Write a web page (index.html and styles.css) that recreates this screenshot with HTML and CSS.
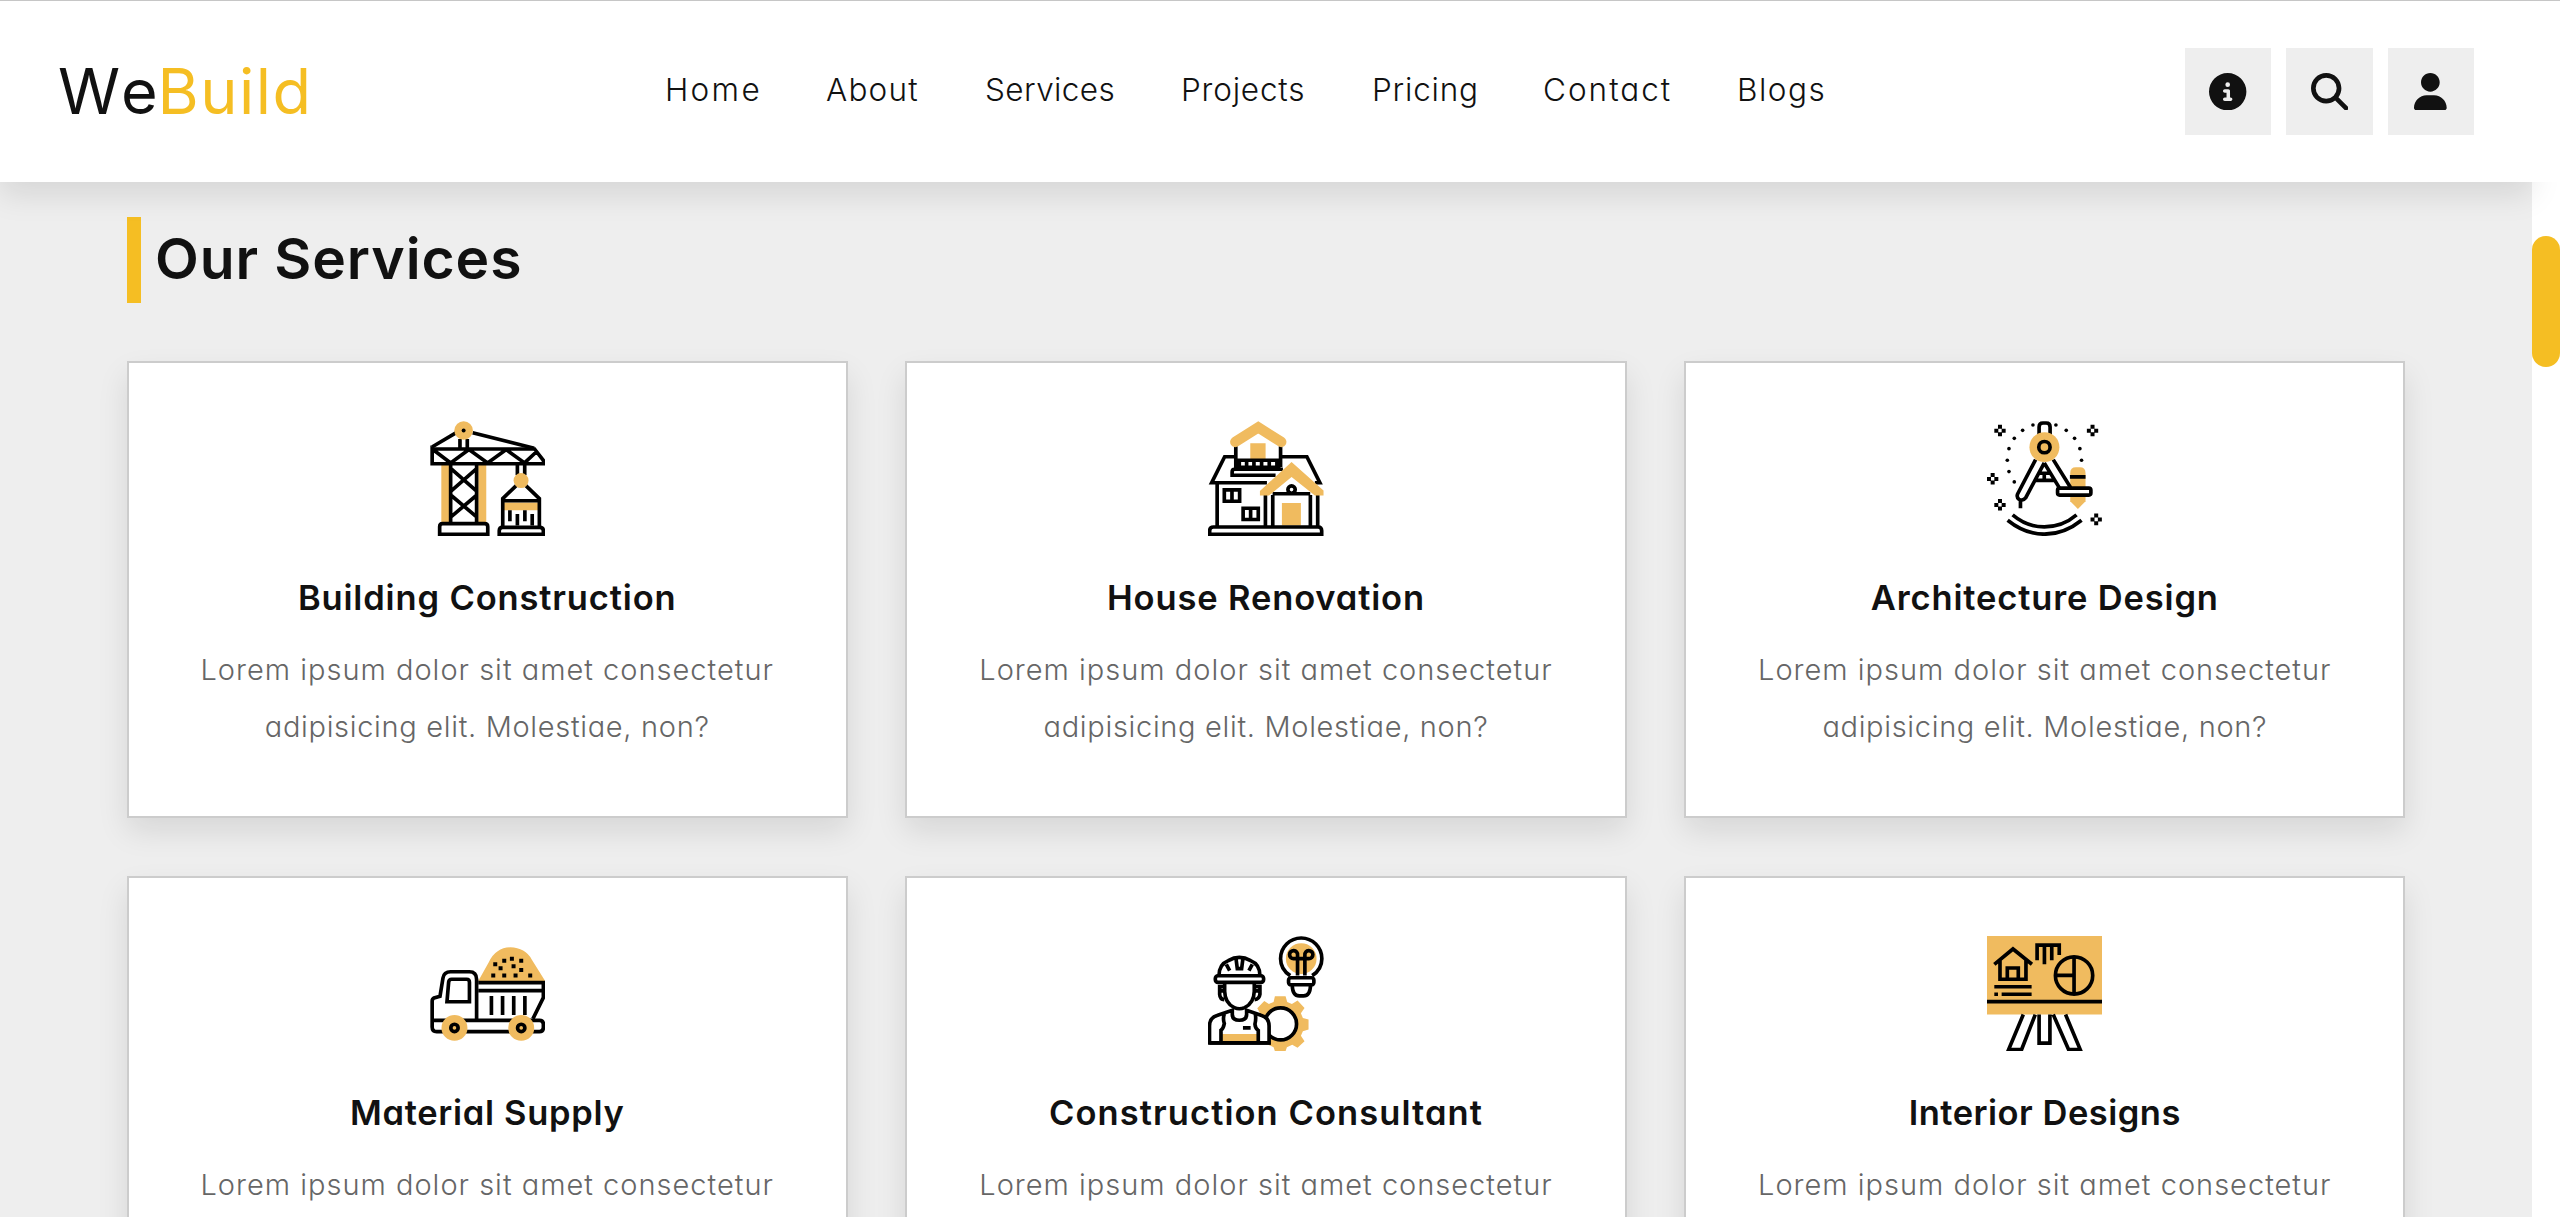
FILE: index.html
```html
<!DOCTYPE html>
<html lang="en">
<head>
<meta charset="utf-8">
<title>WeBuild</title>
<link rel="stylesheet" href="styles.css">
</head>
<body>
<header class="header">
  <a class="logo"><span class="logo-we">We</span><span class="logo-build">Build</span></a>
  <nav class="navbar">
    <a>Home</a><a>About</a><a>Services</a><a>Projects</a><a>Pricing</a><a>Contact</a><a>Blogs</a>
  </nav>
  <div class="icons">
    <button class="icon-btn" aria-label="Info"><svg viewBox="0 0 512 512"><path d="M256 512A256 256 0 1 0 256 0a256 256 0 1 0 0 512zM216 336h24V272H216c-13.3 0-24-10.7-24-24s10.7-24 24-24h48c13.3 0 24 10.7 24 24v88h8c13.3 0 24 10.7 24 24s-10.7 24-24 24H216c-13.3 0-24-10.7-24-24s10.7-24 24-24zm40-208a32 32 0 1 1 0 64 32 32 0 1 1 0-64z"/></svg></button>
    <button class="icon-btn" aria-label="Search"><svg viewBox="0 0 512 512"><path d="M416 208c0 45.9-14.9 88.3-40 122.7L502.6 457.4c12.5 12.5 12.5 32.8 0 45.3s-32.8 12.5-45.3 0L330.7 376c-34.4 25.2-76.8 40-122.7 40C93.1 416 0 322.9 0 208S93.1 0 208 0S416 93.1 416 208zM208 352a144 144 0 1 0 0-288 144 144 0 1 0 0 288z"/></svg></button>
    <button class="icon-btn" aria-label="Account"><svg viewBox="0 0 448 512"><path d="M224 256c70.7 0 128-57.31 128-128s-57.3-128-128-128C153.3 0 96 57.31 96 128S153.3 256 224 256zM274.7 304H173.3C77.61 304 0 381.6 0 477.3c0 19.14 15.52 34.67 34.66 34.67h378.7C432.5 512 448 496.5 448 477.3C448 381.6 370.4 304 274.7 304z"/></svg></button>
  </div>
</header>
<div class="header-end"></div>
<main class="services">
  <h1 class="heading">Our Services</h1>
  <div class="box-container">
    <article class="box">
      <svg class="art" viewBox="59 62 346 346">
        <g class="fill"><path d="M93 194h24v172H93zM204 194h24v172h-24zM281 307h104v23H281z"/></g>
        <g class="line">
          <path d="M65 140L138 97M187 97L372 144M149 116V144M171 116V144"/>
          <path d="M65.500 146H373L400 181V190.500H65.500V146L121 188L176 148L232 188L288 148L343 188L378 155"/>
          <path d="M121 194V366M199 194V366M122 205L199 273M199 205L122 273M122 285L199 350M199 285L122 350"/>
          <path d="M88 402.500V380Q88 370.500 97 370.500H223Q232.500 370.500 232.500 380V402.500Z"/>
          <path d="M321.500 194V224M343.500 194V224M318 256L277.500 295V380M347 256L387.500 295V380M277 301.500H388M299 330V363M321.500 341V376M344 330V363M366 341V376"/>
          <path d="M267 402.500V392Q267 381.500 277 381.500H389Q399.500 381.500 399.500 392V402.500Z"/>
        </g>
        <circle class="fill" cx="160" cy="90.500" r="28"/><circle class="fill" cx="332.500" cy="241" r="22.500"/><circle cx="160" cy="90.500" r="6"/>
      </svg>
      <h3>Building Construction</h3><p>Lorem ipsum dolor sit amet consectetur <span class="tail">adipisicing elit. Molestiae, non?</span></p>
    </article>
    <article class="box">
      <svg class="art" viewBox="55 62 346 346">
        <path class="fill" d="M182 129h46v47h-46zM277 308h57v68h-57z"/>
        <g class="line">
          <path d="M138.500 138V205M273 138V200M138 180H273M138 201H273M149 180V200M171 180V200M193 180V200M216 180V200M239 180V200M262 180V200"/>
          <path d="M134 169.500H105L66 247.500H232M277 169.500H352L391 247.500H376M280 207H135Q127.500 207 127.500 215V225H258"/>
          <path d="M82.500 250V378M227.500 284V378M249.500 284V378M362.500 284V378M384.500 284V378M249 280.500H362"/>
          <circle cx="306" cy="268" r="11"/>
          <path d="M104 269H150V303H104ZM127 269V303M160.500 324H206V358H160.500ZM183 324V358"/>
          <path d="M60 402.500V392Q60 380.500 71 380.500H386Q396.500 380.500 396.500 392V402.500Z"/>
        </g>
        <path class="roof" d="M137 125L206 81L275 125"/>
        <path class="fill" d="M306 185L402 271V286H376L306 230L238 286H211V272Z"/>
      </svg>
      <h3>House Renovation</h3><p>Lorem ipsum dolor sit amet consectetur <span class="tail">adipisicing elit. Molestiae, non?</span></p>
    </article>
    <article class="box">
      <svg class="art" viewBox="51 62 346 346">
        <path class="fill" d="M301 218Q301 201 318 201H330Q347 201 347 218V303L324 326L301 303Z"/>
        <g class="line">
          <path d="M207.500 106V80Q207.500 68 219 68H229Q240.500 68 240.500 80V106M300 230H347"/>
          <path d="M197 178L143 281Q139 291 147 297Q158 304 167 293L223 188M223 188L268 262M250 178L302 262M209 219H239M196 240.500H258M223 219V240M151.500 302V324"/>
          <rect class="paper" x="263" y="263.500" width="100" height="21" rx="6"/>
          <path d="M128 344Q170 380 223 380Q278 380 320 344M113 360Q165 402 223 402Q283 402 335 360"/>
        </g>
        <circle class="fill" cx="223.500" cy="140.500" r="45"/><circle class="line" cx="223.500" cy="140.500" r="17"/>
        <g><circle cx="189" cy="74" r="5.500"/><circle cx="258" cy="74" r="5.500"/><circle cx="158" cy="90" r="5.500"/><circle cx="289" cy="90" r="5.500"/><circle cx="133" cy="114" r="5.500"/><circle cx="314" cy="114" r="5.500"/><circle cx="117" cy="145" r="5.500"/><circle cx="330" cy="145" r="5.500"/><circle cx="112" cy="180" r="5.500"/><circle cx="335" cy="180" r="5.500"/><circle cx="117" cy="214" r="5.500"/><circle cx="133" cy="245" r="5.500"/></g>
        <path d="M84 73h12v12h-12zM84 96h12v12h-12zM73 85h12v12h-12zM95 85h12v12h-12zM362 73h12v12h-12zM362 96h12v12h-12zM351 85h12v12h-12zM373 85h12v12h-12zM62 218h12v12h-12zM62 241h12v12h-12zM51 230h12v12h-12zM73 230h12v12h-12zM84 296h12v12h-12zM84 319h12v12h-12zM73 308h12v12h-12zM95 308h12v12h-12zM373 340h12v12h-12zM373 363h12v12h-12zM362 352h12v12h-12zM384 352h12v12h-12z"/>
      </svg>
      <h3>Architecture Design</h3><p>Lorem ipsum dolor sit amet consectetur <span class="tail">adipisicing elit. Molestiae, non?</span></p>
    </article>
    <article class="box">
      <svg class="art" viewBox="59 47 346 346">
        <path class="fill" d="M204 182L236 125Q257 82 300 81Q345 82 365 118L405 182Z"/>
        <path d="M249 126h12v12h-12zM276 115h12v12h-12zM299 109h12v12h-12zM327 115h12v12h-12zM265 138h12v12h-12zM304 132h12v12h-12zM327 143h12v12h-12zM243 160h12v12h-12zM276 160h12v12h-12zM310 160h12v12h-12zM354 160h12v12h-12z"/>
        <g class="line">
          <path d="M204 187H399.500V232L368 296M204 211H399M243.500 227V284M277 227V284M310.500 227V284M344 227V284"/>
          <path d="M199 300V178Q199 154.500 177 154.500H121Q101 154.500 98 173L89 228L71 233Q65.500 236 65.500 243V320Q65.500 334 79 334H388Q399.500 334 399.500 322V312Q399.500 300.500 388 300.500H66"/>
          <path d="M110 244.500L115 186Q116 177 124 177H169Q177.500 177 177.500 186V244.500Z"/>
        </g>
        <circle class="fill" cx="132.500" cy="323" r="39"/><circle class="fill" cx="333" cy="323" r="39"/>
        <circle class="line" cx="132.500" cy="323" r="11"/><circle class="line" cx="333" cy="323" r="11"/>
      </svg>
      <h3>Material Supply</h3><p>Lorem ipsum dolor sit amet consectetur <span class="tail">adipisicing elit. Molestiae, non?</span></p>
    </article>
    <article class="box">
      <svg class="art" viewBox="55 47 346 346">
        <path class="fill" d="M256 228H288L293 245L307 251L324 241L345 263L334 279L340 293L357 298V328L340 333L334 347L345 363L324 383L308 374L292 381L287 396H257L252 381L236 374V345L300 340V270L230 290L213 282L203 264L224 242L238 251L252 245Z"/>
        <circle class="fill" cx="335" cy="115" r="46"/>
        <g class="line">
          <circle class="paper" cx="273" cy="311" r="48"/>
          <path class="paper" d="M59.500 368V317Q60 291 84 285L128 270V283Q128 300 149 300Q171 300 171 283V270L214 285Q238 291 238.500 317V368Z"/>
          <path class="vest" d="M97 341H202V363H97Z"/>
          <path d="M59 368H243M104 281Q99 296 104 310Q101 325 94 330V366M197 281Q200 296 196 312Q197 325 206 331V366M160 323H183"/>
          <path d="M105 190V213Q106 249 134 262Q149 269 165 262Q193 249 194 213V190M105 199H90V222Q91 237 104 238M194 199H211V222Q209 237 195 238M91 212H105M195 212H210"/>
          <path d="M88 166Q88 132 116 121Q149 102 183 121Q211 132 211 166M110 132L120 151M188 132L178 151M139 114L143 145H156L160 114"/>
          <rect class="paper" x="77" y="166.500" width="145" height="20" rx="8"/>
          <path d="M302 166Q273 147 273 115A62 62 0 0 1 397 115Q397 147 368 166"/>
          <rect x="297" y="172.500" width="76" height="21" rx="7"/>
          <path d="M308 195Q309 227 329 227H342Q362 227 363 195M324 166V104A12 12 0 1 0 312 115H358A12 12 0 1 0 346 104V166"/>
        </g>
      </svg>
      <h3>Construction Consultant</h3><p>Lorem ipsum dolor sit amet consectetur <span class="tail">adipisicing elit. Molestiae, non?</span></p>
    </article>
    <article class="box">
      <svg class="art" viewBox="51 47 346 346">
        <path class="fill" d="M51 47H397V283H51Z"/>
        <g class="line">
          <path d="M73 132L129 86L186 132M90 120V177H168V120M112 177V143H145V177M73 199.500H185M73 222H84M95 222H185M51 244H397"/>
          <path d="M201.500 120V74.500H268V104M223.500 75V132M245.500 75V120"/>
          <circle cx="312.500" cy="165.500" r="56"/><path d="M312.500 110V221M257 165.500H312"/>
          <path d="M160 283L116 388H155L196 283M207.500 283V369H240V283M250 283L296 388H331L287 283"/>
        </g>
      </svg>
      <h3>Interior Designs</h3><p>Lorem ipsum dolor sit amet consectetur <span class="tail">adipisicing elit. Molestiae, non?</span></p>
    </article>
  </div>
</main>
<aside class="scrollbar"><div class="thumb"></div></aside>
</body>
</html>
```
FILE: styles.css
```css
* { box-sizing: border-box; margin: 0; padding: 0; }
body {
  display: grid;
  grid-template: 181px 1035px / 1fr 28px;
  height: 1217px;
  overflow: hidden;
  border-top: 1px solid #c6c6c6;
  background: #fff;
  color: #111;
  font-family: Inter, "Open Sans", sans-serif;
  font-feature-settings: "cv11";
}
.header {
  z-index: 1;
  display: grid;
  grid-template-columns: 607px 1fr auto;
  align-items: center;
  padding: 0 58px;
  background: #fff;
  box-shadow: 0 14.4px 28.8px rgba(0, 0, 0, .1);
}
.header-end { z-index: 2; background: #fff; }
.logo { display: flex; margin-top: -2px; font-size: 63px; }
.logo-we { letter-spacing: 4px; margin-right: -4px; }
.logo-build { color: #f5be23; letter-spacing: 1.5px; }
.navbar {
  display: grid;
  grid-template-columns: 161px 159px 196px 191px 171px 194px auto;
  justify-content: start;
  margin-top: -4px;
  font-size: 31.5px;
  font-weight: 300;
}
.navbar a:nth-child(1) { letter-spacing: 2.3px; }
.navbar a:nth-child(2) { letter-spacing: 1.2px; }
.navbar a:nth-child(3) { letter-spacing: .4px; }
.navbar a:nth-child(4) { letter-spacing: .8px; }
.navbar a:nth-child(5) { letter-spacing: .8px; }
.navbar a:nth-child(6) { letter-spacing: 2px; }
.navbar a:nth-child(7) { letter-spacing: 1.5px; }
.icons { display: flex; gap: 15px; }
.icon-btn {
  display: grid;
  place-items: center;
  width: 86.4px;
  height: 87px;
  border: 0;
  background: #eee;
}
.icon-btn svg { height: 37.4px; fill: #111; }
.services {
  min-height: 0;
  overflow: hidden;
  padding: 35px 126.6px 0;
  background: #eee;
}
.heading {
  margin-bottom: 58px;
  padding-left: 14.4px;
  border-left: 14.4px solid #f5be23;
  font-size: 57px;
  font-weight: 600;
  line-height: 84px;
  padding-bottom: 2px;
  letter-spacing: .9px;
}
.box-container { display: grid; grid-template-columns: repeat(3, 1fr); gap: 57.6px; }
.box {
  height: 457.4px;
  padding: 57.6px 55px;
  border: 2px solid #ccc;
  background: #fff;
  box-shadow: 0 14.4px 28.8px rgba(0, 0, 0, .1);
  text-align: center;
}
.box h3 {
  padding-top: 19px;
  padding-bottom: 1px;
  font-size: 34.5px;
  font-weight: 600;
  line-height: 86px;
  letter-spacing: .85px;
}
.box:nth-child(5) h3 { letter-spacing: 1.07px; }
.box:nth-child(4) h3 { letter-spacing: .7px; }
.box:nth-child(6) h3 { letter-spacing: .5px; }
.box p {
  margin-top: -1px;
  color: #666;
  font-size: 29px;
  font-weight: 300;
  line-height: 57.6px;
  letter-spacing: 1px;
}
.tail { letter-spacing: .68px; }
.art { display: block; width: 115.2px; height: 115.2px; margin: 0 auto; }
.fill { fill: #f0bb5f; }
.line { fill: none; stroke: #000; stroke-width: 11; }
.paper { fill: #fff; }
.vest { fill: #f0bb5f; stroke: none; }
.roof { fill: none; stroke: #f0bb5f; stroke-width: 31; stroke-linecap: round; }
.scrollbar { padding-top: 54px; background: #fff; }
.thumb { height: 131px; border-radius: 14px; background: #f5be23; }
```
